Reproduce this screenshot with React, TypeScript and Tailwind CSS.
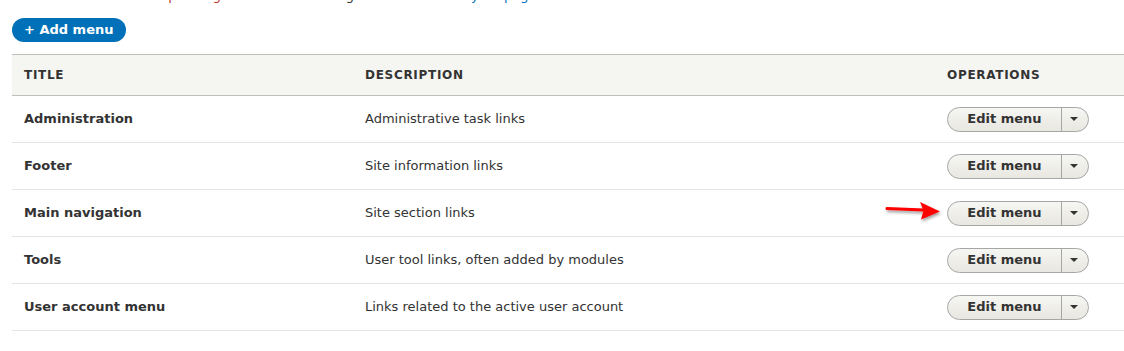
const menus = [
  { title: "Administration", description: "Administrative task links" },
  { title: "Footer", description: "Site information links" },
  { title: "Main navigation", description: "Site section links", arrow: true },
  { title: "Tools", description: "User tool links, often added by modules" },
  { title: "User account menu", description: "Links related to the active user account" },
];

function RedArrow() {
  return (
    <svg
      className="pointer-events-none absolute left-[-64px] top-[-5px]"
      width="62"
      height="28"
      viewBox="0 0 62 28"
    >
      <defs>
        <filter id="arrowShadow" x="-20%" y="-50%" width="140%" height="200%">
          <feDropShadow dx="1" dy="2" stdDeviation="1.5" floodColor="#000" floodOpacity="0.4" />
        </filter>
      </defs>
      <g filter="url(#arrowShadow)">
        <path d="M3 11.5 L40 13" stroke="#ff0000" strokeWidth="3" strokeLinecap="round" />
        <path d="M36 5 L56 14.5 L37 22.5 L39.5 13.5 Z" fill="#ff0000" />
      </g>
    </svg>
  );
}

function EditButton({ arrow }: { arrow?: boolean }) {
  return (
    <div className="relative inline-flex h-[25px] items-stretch rounded-full border border-[#a6a6a6] bg-gradient-to-b from-[#f6f6f3] to-[#e8e7e0] text-[#333]">
      {arrow ? <RedArrow /> : null}
      <span className="flex w-[113px] items-center justify-center text-[13px] font-bold">Edit menu</span>
      <span className="w-px bg-[#a6a6a6]" />
      <span className="flex w-[26px] items-center justify-center">
        <span className="ml-[-2px] h-0 w-0 border-x-[4px] border-t-[4px] border-x-transparent border-t-[#333]" />
      </span>
    </div>
  );
}

export default function App() {
  return (
    <div className="h-[351px] w-[1124px] overflow-hidden bg-white font-['DejaVu_Sans',sans-serif] text-[#333]">
      <p className="mt-[-12px] h-[13px] pl-3 text-[13px] leading-[16px] whitespace-nowrap text-[#333]">
        <span className="text-[#333]">Each menu has a </span>
        <span className="text-[#c0392b]">corresponding</span>
        <span> block that is managed on the </span>
        <span className="text-[#0074bd]">Block layout page</span>
        <span>.</span>
      </p>
      <div className="pl-3 pt-[17px]">
        <button
          type="button"
          className="flex h-[24px] items-center rounded-full bg-[#0071b8] px-[12px] text-[13px] font-bold text-white"
        >
          + Add menu
        </button>
      </div>
      <div className="mt-[12px] pl-3">
        <div className="flex h-[42px] items-center border-y border-[#bfbfba] bg-[#f5f5f2] text-[12px] font-bold tracking-[0.7px] uppercase">
          <div className="w-[341px] pl-3">Title</div>
          <div className="w-[582px] pl-3">Description</div>
          <div className="flex-1 pl-3">Operations</div>
        </div>
        {menus.map((menu) => (
          <div key={menu.title} className="flex h-[47px] items-center border-b border-[#e6e4df] text-[13px]">
            <div className="w-[341px] pl-3 font-bold">{menu.title}</div>
            <div className="w-[582px] pl-3">{menu.description}</div>
            <div className="flex-1 pl-3">
              <EditButton arrow={menu.arrow} />
            </div>
          </div>
        ))}
      </div>
    </div>
  );
}
